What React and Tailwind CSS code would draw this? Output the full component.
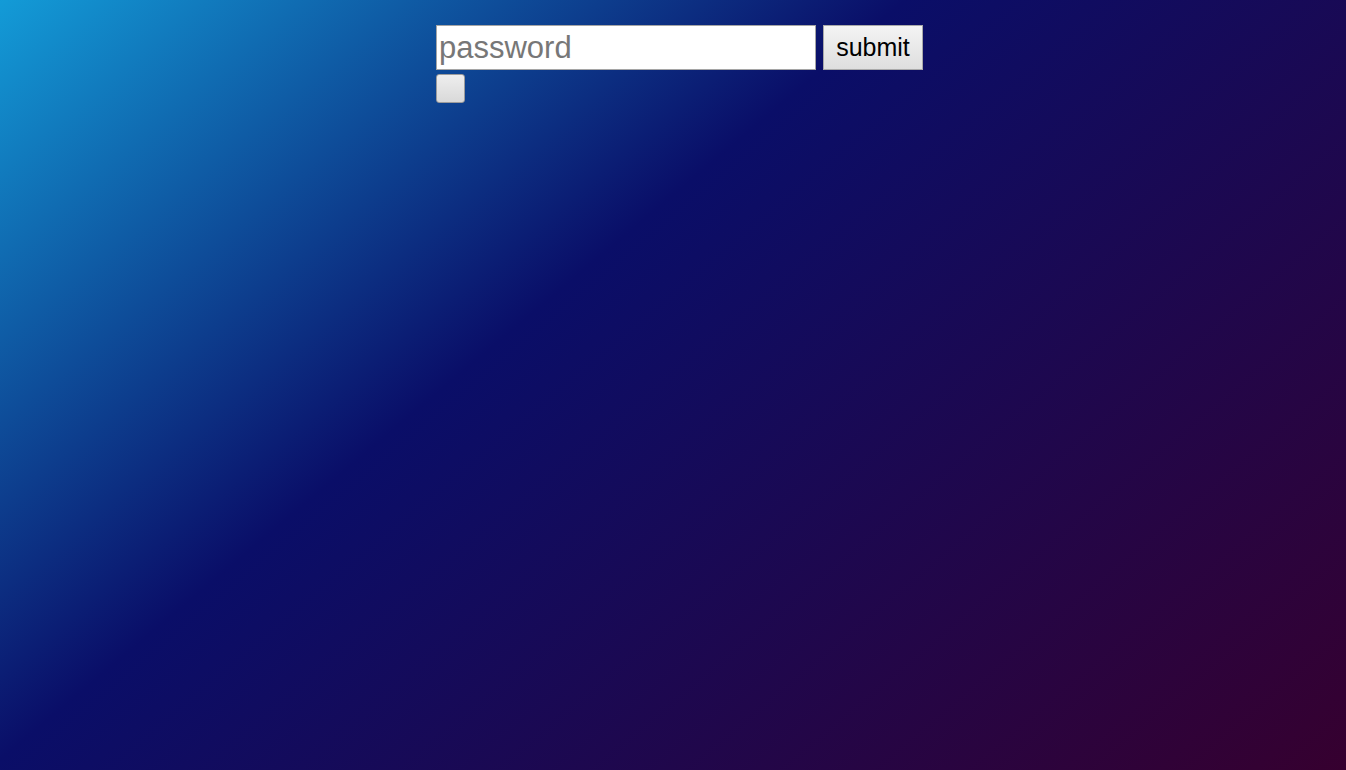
export default function App() {
  return (
    <div
      className="min-h-[770px] w-full bg-[linear-gradient(140deg,#139bd7_0%,#0a0e68_40%,#36002f_100%)]"
      style={{ fontFamily: '"Liberation Sans", Arial, sans-serif' }}
    >
      <div className="mx-auto w-[474px] pt-[25px]">
        <form className="flex flex-col items-start gap-[4px]" onSubmit={(e) => e.preventDefault()}>
          <div className="flex items-start gap-[7px] whitespace-nowrap">
            <input
              type="password"
              placeholder="password"
              className="h-[45px] w-[380px] border border-[#a5a5a5] bg-white px-[2px] text-[31px] leading-none text-black outline-none placeholder:text-[#777777]"
            />
            <button
              type="submit"
              className="h-[45px] w-[100px] border border-[#a9a9a9] bg-[linear-gradient(#f4f4f4,#dedede)] text-[25px] leading-none text-black"
            >
              submit
            </button>
          </div>
          <input
            type="checkbox"
            className="h-[29px] w-[29px] appearance-none rounded-[3px] border border-[#9c9c9c] bg-[linear-gradient(#eeeeee,#d9d9d9)]"
          />
        </form>
      </div>
    </div>
  )
}
